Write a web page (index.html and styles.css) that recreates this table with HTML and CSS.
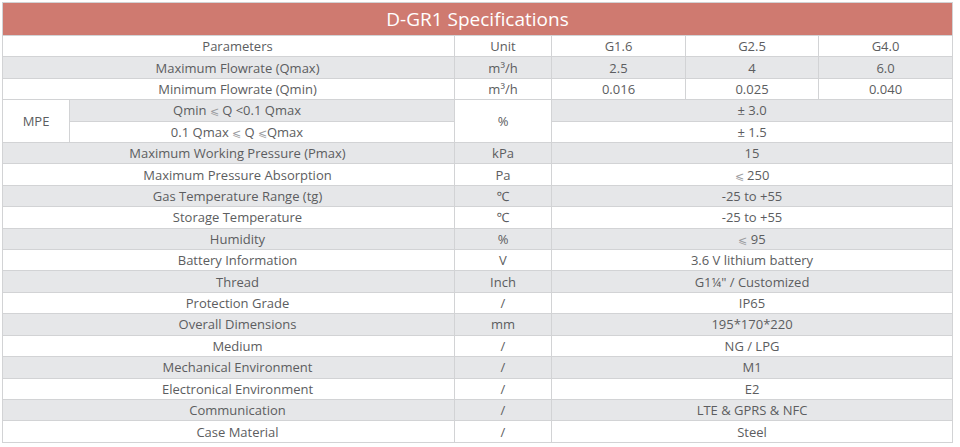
FILE: index.html
```html
<!DOCTYPE html>
<html lang="en">
<head>
<meta charset="utf-8">
<title>D-GR1 Specifications</title>
<link rel="stylesheet" href="styles.css">
</head>
<body>
<table class="spec">
  <colgroup>
    <col class="c-a"><col class="c-b"><col class="c-unit"><col class="c-g1"><col class="c-g2"><col class="c-g3">
  </colgroup>
  <thead>
    <tr class="title-row"><th colspan="6">D-GR1 Specifications</th></tr>
  </thead>
  <tbody>
    <tr><td colspan="2" class="param">Parameters</td><td>Unit</td><td>G1.6</td><td>G2.5</td><td>G4.0</td></tr>
    <tr class="alt"><td colspan="2" class="param">Maximum Flowrate (Qmax)</td><td>m³/h</td><td>2.5</td><td>4</td><td>6.0</td></tr>
    <tr><td colspan="2" class="param">Minimum Flowrate (Qmin)</td><td>m³/h</td><td>0.016</td><td>0.025</td><td>0.040</td></tr>
    <tr class="alt"><td rowspan="2" class="plain">MPE</td><td class="sub">Qmin <span class="sym">⩽</span> Q &lt;0.1 Qmax</td><td rowspan="2" class="plain">%</td><td colspan="3">± 3.0</td></tr>
    <tr><td class="sub">0.1 Qmax <span class="sym">⩽</span> Q <span class="sym">⩽</span>Qmax</td><td colspan="3">± 1.5</td></tr>
    <tr class="alt"><td colspan="2" class="param">Maximum Working Pressure (Pmax)</td><td>kPa</td><td colspan="3">15</td></tr>
    <tr><td colspan="2" class="param">Maximum Pressure Absorption</td><td>Pa</td><td colspan="3"><span class="sym">⩽</span> 250</td></tr>
    <tr class="alt"><td colspan="2" class="param">Gas Temperature Range (tg)</td><td>℃</td><td colspan="3">-25 to +55</td></tr>
    <tr><td colspan="2" class="param">Storage Temperature</td><td>℃</td><td colspan="3">-25 to +55</td></tr>
    <tr class="alt"><td colspan="2" class="param">Humidity</td><td>%</td><td colspan="3"><span class="sym">⩽</span> 95</td></tr>
    <tr><td colspan="2" class="param">Battery Information</td><td>V</td><td colspan="3">3.6 V lithium battery</td></tr>
    <tr class="alt"><td colspan="2" class="param">Thread</td><td>Inch</td><td colspan="3">G1¼" / Customized</td></tr>
    <tr><td colspan="2" class="param">Protection Grade</td><td>/</td><td colspan="3">IP65</td></tr>
    <tr class="alt"><td colspan="2" class="param">Overall Dimensions</td><td>mm</td><td colspan="3">195*170*220</td></tr>
    <tr><td colspan="2" class="param">Medium</td><td>/</td><td colspan="3">NG / LPG</td></tr>
    <tr class="alt"><td colspan="2" class="param">Mechanical Environment</td><td>/</td><td colspan="3">M1</td></tr>
    <tr><td colspan="2" class="param">Electronical Environment</td><td>/</td><td colspan="3">E2</td></tr>
    <tr class="alt"><td colspan="2" class="param">Communication</td><td>/</td><td colspan="3">LTE &amp; GPRS &amp; NFC</td></tr>
    <tr><td colspan="2" class="param">Case Material</td><td>/</td><td colspan="3">Steel</td></tr>
  </tbody>
</table>
</body>
</html>
```

FILE: styles.css
```css
html, body {
  margin: 0;
  padding: 0;
  background: #ffffff;
}

body {
  padding: 2px 0 0 2px;
  font-family: "Open Sans", "Noto Sans", sans-serif;
  color: #5c5d60;
}

.spec {
  width: 951px;
  table-layout: fixed;
  border-collapse: collapse;
  border: 1px solid #d2d3d5;
}

.c-a { width: 67px; }
.c-b { width: 385px; }
.c-unit { width: 97px; }
.c-g1 { width: 134px; }
.c-g2 { width: 133px; }
.c-g3 { width: 134px; }

.title-row th {
  height: 32px;
  padding: 0;
  background: #cf7a70;
  color: #ffffff;
  font-size: 19px;
  font-weight: 500;
  line-height: 22px;
  text-align: center;
  vertical-align: middle;
  border: 1px solid #d2d3d5;
  border-bottom: none;
}

.spec td {
  height: 20.42px;
  padding: 0;
  font-size: 13px;
  font-weight: 400;
  line-height: 16px;
  text-align: center;
  vertical-align: middle;
  border: 1px solid #d2d3d5;
  white-space: nowrap;
}

.spec td.param {
  padding-left: 18px;
}

.spec td.sub {
  padding-right: 50px;
}

.spec tr.alt td {
  background: #e6e7e9;
}

.spec tr.alt td.plain {
  background: #ffffff;
}

.sym {
  color: #9a9b9e;
  font-size: 11px;
  line-height: 1;
}
```
